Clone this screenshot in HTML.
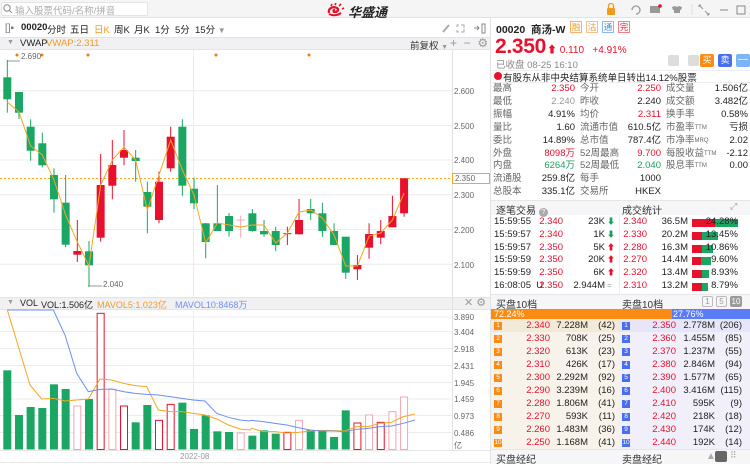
<!DOCTYPE html>
<html><head><meta charset="utf-8">
<style>
*{margin:0;padding:0;box-sizing:border-box}
body{width:750px;height:464px;overflow:hidden;background:#fff;font-family:"Liberation Sans","Noto Sans CJK SC",sans-serif;font-size:10px;color:#222;position:relative}
.a{position:absolute;white-space:nowrap}
.r{color:#e8112d}.g{color:#18a058}.gr{color:#999}.o{color:#f39a1e}
.rt{text-align:right}
</style></head><body>
<!-- top bar -->
<div class="a" style="left:0;top:0;width:750px;height:18px;background:#f5f5f5;border-bottom:1px solid #e2e2e2"></div>
<div class="a" style="left:1px;top:2px;width:147px;height:14px;background:#fff;border:1px solid #e4e4e4;border-radius:2px"></div>
<svg class="a" style="left:3px;top:4px" width="10" height="10"><circle cx="4" cy="4" r="3.2" fill="none" stroke="#888" stroke-width="1"/><line x1="6.5" y1="6.5" x2="9" y2="9" stroke="#888"/></svg>
<div class="a gr" style="left:15px;top:3px;font-size:9.5px;color:#aaa">输入股票代码/名称/拼音</div>
<svg class="a" style="left:327px;top:3px" width="18" height="14"><path d="M2 10 C1 5 6 3 10 5 C12 6 11 9 8 9 C6 9 6 7 8 7" fill="none" stroke="#e8112d" stroke-width="2.3"/><path d="M4 3 L5 1 M8 2 L9 0 M12 3 L14 1 M15 6 L17 5" stroke="#e8112d" stroke-width="1.6"/><path d="M2 11 Q8 14 14 10" fill="none" stroke="#e8112d" stroke-width="2"/></svg>
<div class="a" style="left:348px;top:2px;font-size:13px;font-weight:bold;font-style:italic;color:#222">华盛通</div>
<svg class="a" style="left:596px;top:3px" width="154" height="13">
<rect x="11" y="5" width="8" height="7" rx="1" fill="#f39a1e"/><path d="M12.5 5 V3 a2.5 2.5 0 0 1 5 0 V5" fill="none" stroke="#f39a1e" stroke-width="1.3"/>
<path d="M36 7 a4 4 0 1 1 4 4" fill="none" stroke="#999" stroke-width="1.3"/>
<rect x="54" y="3" width="10" height="7" fill="#999"/><circle cx="64" cy="3" r="1.8" fill="#e8112d"/>
<path d="M76 4 L79 3 L81 4 L83 3 L86 4 L85 7 L84 7 L84 10 L78 10 L78 7 L77 7Z" fill="#999"/>
<line x1="96" y1="1" x2="96" y2="12" stroke="#ddd"/>
<path d="M103 2 L107 6 M109 8 L113 12 M103 2 h2 M103 2 v2 M113 12 h-2 M113 12 v-2" stroke="#999" stroke-width="1.1" fill="none"/>
<line x1="124" y1="7" x2="132" y2="7" stroke="#888"/>
<rect x="141" y="3" width="8" height="8" fill="none" stroke="#888"/>
<path d="M154 3 L162 11 M162 3 L154 11" stroke="#888"/>
</svg>
<!-- left tabs -->
<div class="a" style="left:5px;top:23px;color:#777">[]▪</div>
<div class="a" style="left:21px;top:22px;font-weight:bold;font-size:9.5px">00020</div>
<div class="a" style="left:47px;top:22px;font-size:9.5px">分时</div>
<div class="a" style="left:70px;top:22px;font-size:9.5px">五日</div>
<div class="a o" style="left:94px;top:22px;font-size:9.5px">日K</div>
<div class="a" style="left:114px;top:22px;font-size:9.5px">周K</div>
<div class="a" style="left:134px;top:22px;font-size:9.5px">月K</div>
<div class="a" style="left:155px;top:22px;font-size:9.5px">1分</div>
<div class="a" style="left:175px;top:22px;font-size:9.5px">5分</div>
<div class="a" style="left:195px;top:22px;font-size:9.5px">15分 <span style="color:#999;font-size:8px">▼</span></div>
<svg class="a" style="left:440px;top:21px" width="50" height="14"><path d="M3 11 L9 4" stroke="#aaa" stroke-width="2"/><path d="M21 4 h3 v3 M21 11 h3 v-3 M19 4 h-2 v2 M19 11 h-2 v-2" stroke="#aaa" fill="none"/><path d="M34 7 h5 M37 5 l2 2 -2 2" stroke="#888" fill="none"/><rect x="42" y="3" width="3" height="9" fill="none" stroke="#888"/></svg>
<!-- VWAP bar -->
<div class="a" style="left:0;top:37px;width:490px;height:13px;background:#f1f1f3;border-top:1px solid #e4e4e4;border-bottom:1px solid #e4e4e4"></div>
<div class="a gr" style="left:7px;top:39px;font-size:7px">▼</div>
<div class="a" style="left:20px;top:38px;font-size:9.5px">VWAP</div>
<div class="a o" style="left:46px;top:38px;font-size:9.5px">VWAP:2.311</div>
<div class="a" style="left:410px;top:38px;font-size:9.5px;color:#333">前复权 <span style="color:#999;font-size:7px">▼</span></div>
<div class="a gr" style="left:450px;top:36px;font-size:12px">+ &nbsp;− &nbsp;⚙</div>
<!-- VOL bar -->
<div class="a" style="left:0;top:297px;width:490px;height:13px;background:#f1f1f3;border-top:1px solid #e4e4e4;border-bottom:1px solid #e4e4e4"></div>
<div class="a gr" style="left:7px;top:299px;font-size:7px">▼</div>
<div class="a" style="left:20px;top:298px;font-size:9px">VOL</div>
<div class="a" style="left:41px;top:298px;font-size:9px">VOL:1.506亿</div>
<div class="a o" style="left:97px;top:298px;font-size:9px">MAVOL5:1.023亿</div>
<div class="a" style="left:175px;top:298px;font-size:9px;color:#6d8ff0">MAVOL10:8468万</div>
<div class="a gr" style="left:464px;top:296px;font-size:11px">✕ ⚙</div>
<!-- charts -->
<svg class="a" style="left:0;top:0" width="490" height="464">
<g stroke="#ececec" stroke-width="1">
<line x1="0" y1="90.7" x2="452" y2="90.7"/><line x1="0" y1="125.5" x2="452" y2="125.5"/><line x1="0" y1="160" x2="452" y2="160"/><line x1="0" y1="194.8" x2="452" y2="194.8"/><line x1="0" y1="229.5" x2="452" y2="229.5"/><line x1="0" y1="264.3" x2="452" y2="264.3"/>
<line x1="193.5" y1="50" x2="193.5" y2="296"/><line x1="193.5" y1="311" x2="193.5" y2="450"/>
<line x1="0" y1="317" x2="452" y2="317"/><line x1="0" y1="331.5" x2="452" y2="331.5"/><line x1="0" y1="348.5" x2="452" y2="348.5"/><line x1="0" y1="365.5" x2="452" y2="365.5"/><line x1="0" y1="382.5" x2="452" y2="382.5"/><line x1="0" y1="399" x2="452" y2="399"/><line x1="0" y1="415.5" x2="452" y2="415.5"/><line x1="0" y1="432.5" x2="452" y2="432.5"/>
</g>
<line x1="452.5" y1="50" x2="452.5" y2="450" stroke="#e2e2e2"/>
<line x1="0" y1="450.5" x2="490" y2="450.5" stroke="#e6e6e6"/>
<line x1="0" y1="462.5" x2="490" y2="462.5" stroke="#e6e6e6"/>
<g fill="#666" font-size="8" font-family="Liberation Sans,sans-serif">
<text x="454" y="94">2.600</text><text x="454" y="129">2.500</text><text x="454" y="163">2.400</text><text x="454" y="198">2.300</text><text x="454" y="233">2.200</text><text x="454" y="268">2.100</text>
<text x="454" y="320">3.890</text><text x="454" y="335">3.404</text><text x="454" y="352">2.918</text><text x="454" y="369">2.431</text><text x="454" y="386">1.945</text><text x="454" y="402">1.459</text><text x="454" y="419">0.973</text><text x="454" y="436">0.486</text><text x="454" y="448">亿</text>
<text x="180" y="459" fill="#999">2022-08</text>
<text x="21" y="59">2.690</text><text x="103" y="287">2.040</text>
</g>
<path d="M7 61 H20 M88 286 H102" stroke="#777" stroke-width="0.8" fill="none"/>
<g fill="#f57c00"><circle cx="17" cy="55" r="1.5"/><circle cx="42" cy="55" r="1.5"/><circle cx="88" cy="55" r="1.5"/><circle cx="216" cy="55" r="1.5"/><circle cx="309" cy="55" r="1.5"/></g>
<line x1="0" y1="178.5" x2="452" y2="178.5" stroke="#f5a623" stroke-dasharray="2,2"/>
<g id="cd"></g>
<polyline id="vw" fill="none" stroke="#f5a623" stroke-width="1"/>
<g id="vb"></g>
<g transform="translate(0,295) scale(0.3333)" fill="none" stroke-width="3">
<polyline stroke="#f5a623" points="22,45 90,270 125,312 160,310 195,318 230,315 265,312 300,252 335,255 370,265 405,272 440,275 475,345 510,350 545,350 580,355 615,360 650,372 685,390 720,402 750,405 755,400 790,410 825,410 860,414 895,412 930,408 965,406 1000,407 1035,408 1070,395 1105,395 1140,385 1175,382 1210,365 1245,357"/>
<polyline stroke="#6d8ff0" points="22,45 160,45 195,120 230,235 265,290 300,283 335,282 370,290 405,295 440,298 475,300 510,305 545,310 580,315 615,318 650,355 685,367 720,375 750,378 755,376 790,380 825,385 860,390 895,398 930,405 965,408 1000,408 1035,410 1070,403 1105,400 1140,395 1175,393 1210,385 1245,375"/>
</g>
</svg>
<div class="a" style="left:452px;top:173px;width:38px;height:11px;border:1px solid #f5a623;background:#fff;font-size:8px;color:#666;padding-left:2px;line-height:9px">2.350</div>
<script>
var C=[['g',77.3,99.3,60,112.7],['g',92,112.7,92,119],['g',126.7,150.7,119.3,160.7],['g',143.3,165.3,132.7,167.3],['g',175,199.3,168.3,212.7],['g',202.7,244.7,175,247.3],['r',251,254.7,220,262],['g',251.3,265.3,241,286.7],['r',185,237.7,154,241.7],['r',165,185.7,140,199.3],['r',150,157.7,130,165.3],['g',157.7,161,150,181.7],['g',192,206.7,181.7,233.3],['r',181.7,220,171.7,223.3],['r',136.7,168.3,126.7,171.7],['g',126.7,185.7,119.3,195.7],['g',188.7,203.3,177.7,209],['g',223.3,242,223,258.3],['g',223.3,231,185,231],['g',216,231,213,236.7],['p',219.5,220.5,215.7,237.7],['g',213.3,231,209,231.7],['g',231,234.3,220,236.7],['g',231,245,226.7,251],['r',233.2,234.2,226.7,245],['r',220,234.3,199,234.3],['g',209,213.3,199,220],['g',213.3,231,202.7,236.7],['g',231,245,223.3,245],['g',236.7,272.7,236.7,279],['r',265,269.3,255,280],['r',234,247.7,223.3,258.7],['r',231,237.7,220,244.3],['r',216,227.3,195.7,227.3],['r',178.3,213.3,178.3,216.7]];
var V=[[226,'g'],[360,'g'],[336,'g'],[339,'g'],[268,'g'],[282,'g'],[333,'p'],[312,'g'],[55,'r'],[283,'p'],[333,'r'],[382,'g'],[330,'g'],[376,'r'],[328,'r'],[323,'g'],[402,'g'],[361,'g'],[409,'g'],[411,'g'],[414,'p'],[422,'g'],[406,'g'],[416,'g'],[412,'r'],[376,'p'],[405,'g'],[405,'g'],[426,'g'],[346,'g'],[384,'r'],[360,'p'],[382,'r'],[350,'p'],[306,'p']];
var W=[102,112,146,155,180,215,242,266,185,160,147,160,210,175,140,170,195,243,223,225,227,225,225,243,233,212,210,218,235,266,266,236,233,220,193];
var s='',pts=[],v='';
for(var i=0;i<C.length;i++){var c=C[i],x=7.3+11.67*i,col=c[0]=='g'?'#1ba664':(c[0]=='r'?'#e8112d':'#f4a6b0');
s+='<line x1="'+x+'" y1="'+c[3]+'" x2="'+x+'" y2="'+c[4]+'" stroke="'+col+'" stroke-width="1"/>';
s+='<rect x="'+(x-4)+'" y="'+c[1]+'" width="8" height="'+Math.max(1,c[2]-c[1])+'" fill="'+col+'"/>';
pts.push(x+','+W[i]);
var t=295+V[i][0]/3,h=449.5-t;
if(V[i][1]=='g')v+='<rect x="'+(x-4)+'" y="'+t+'" width="8" height="'+h+'" fill="#1ba664"/>';
else v+='<rect x="'+(x-3.5)+'" y="'+t+'" width="7" height="'+h+'" fill="#fff" stroke="'+(V[i][1]=='r'?'#e8112d':'#f4a6b0')+'"/>';}
document.getElementById('cd').innerHTML=s;document.getElementById('vw').setAttribute('points',pts.join(' '));document.getElementById('vb').innerHTML=v;
</script>
<!-- right panel -->
<div class="a" style="left:490px;top:18px;width:1px;height:446px;background:#e2e2e2"></div>
<div class="a" style="left:496px;top:22px;font-size:10.5px;font-weight:bold">00020 &nbsp;商汤-W</div>
<div class="a" style="left:570px;top:21px;width:12px;height:12px;border:1px solid #f5b070;color:#f39a1e;font-size:8.5px;text-align:center;line-height:10px">融</div>
<div class="a" style="left:586px;top:21px;width:12px;height:12px;border:1px solid #f5c090;color:#f39a1e;font-size:8.5px;text-align:center;line-height:10px">沽</div>
<div class="a" style="left:602px;top:21px;width:12px;height:12px;border:1px solid #8fb5f0;color:#4a85e8;font-size:8.5px;text-align:center;line-height:10px">通</div>
<div class="a" style="left:618px;top:21px;width:12px;height:12px;border:1px solid #f08090;color:#e8112d;font-size:8.5px;text-align:center;line-height:10px">完</div>
<div class="a r" style="left:495px;top:35px;font-size:21px;font-weight:bold;letter-spacing:-0.3px">2.350</div>
<div class="a r" style="left:547px;top:41px;font-size:10px">⬆ 0.110 &nbsp; +4.91%</div>
<div class="a gr" style="left:496px;top:57px;font-size:9.5px;color:#888">已收盘 08-25 16:10</div>
<div class="a" style="left:668px;top:55px;width:11px;height:11px;background:#ddd;border-radius:2px"></div>
<div class="a" style="left:688px;top:55px;width:11px;height:11px;background:#ddd;border-radius:2px"></div>
<div class="a" style="left:700px;top:54px;width:14px;height:13px;background:#fa8c16;color:#fff;font-size:9px;text-align:center;line-height:13px;border-radius:2px">买</div>
<div class="a" style="left:718px;top:54px;width:14px;height:13px;background:#4a6ef0;color:#fff;font-size:9px;text-align:center;line-height:13px;border-radius:2px">卖</div>
<div class="a" style="left:736px;top:54px;width:14px;height:13px;background:#7cb5f5;color:#fff;font-size:10px;text-align:center;line-height:12px;border-radius:2px">—</div>
<div class="a" style="left:491px;top:70px;width:259px;height:1px;background:#eee"></div>
<div class="a" style="left:494px;top:72px;width:8px;height:8px;border-radius:50%;background:#e8112d"></div>
<div class="a" style="left:503px;top:70px;font-size:9.5px">有股东从非中央结算系统单日转出14.12%股票</div>
<div class="a" style="left:491px;top:82px;width:259px;height:1px;background:#eee"></div>
<div class="a" style="left:493px;top:83px;width:257px;font-size:9.5px">
<div style="position:relative;height:117px;line-height:12.9px">
<div class="a" style="left:0;top:0;color:#666">最高<br>最低<br>振幅<br>量比<br>委比<br>外盘<br>内盘<br>流通股<br>总股本</div>
<div class="a rt" style="left:0;width:82px;top:0"><span class="r">2.350</span><br><span class="gr">2.240</span><br>4.91%<br>1.60<br>14.89%<br><span class="r">8098万</span><br><span class="g">6264万</span><br>259.8亿<br>335.1亿</div>
<div class="a" style="left:87px;top:0;color:#666">今开<br>昨收<br>均价<br>流通市值<br>总市值<br>52周最高<br>52周最低<br>每手<br>交易所</div>
<div class="a rt" style="left:87px;width:81px;top:0"><span class="r">2.250</span><br>2.240<br><span class="r">2.311</span><br>610.5亿<br>787.4亿<br><span class="r">9.700</span><br><span class="g">2.040</span><br>1000<br>HKEX</div>
<div class="a" style="left:173px;top:0;color:#666">成交量<br>成交额<br>换手率<br>市盈率<span style="font-size:6px;vertical-align:top">TTM</span><br>市净率<span style="font-size:6px;vertical-align:top">MRQ</span><br>每股收益<span style="font-size:6px;vertical-align:top">TTM</span><br>股息率<span style="font-size:6px;vertical-align:top">TTM</span></div>
<div class="a rt" style="left:173px;width:82px;top:0">1.506亿<br>3.482亿<br>0.58%<br>亏损<br>2.02<br>-2.12<br>0.00</div>
</div></div>
<div class="a" style="left:491px;top:200px;width:259px;height:15px;background:#f6f6f8;border-top:1px solid #e6e6e6"></div>
<div class="a" style="left:496px;top:202px;font-size:10px;color:#333">逐笔交易 <span style="display:inline-block;width:9px;height:9px;border-radius:50%;background:#aaa;color:#fff;font-size:7px;text-align:center;line-height:9px">?</span></div>
<div class="a" style="left:622px;top:202px;font-size:10px;color:#333">成交统计</div>
<div class="a gr" style="left:730px;top:201px;font-size:9px">⤢</div>
<div class="a" style="left:619px;top:215px;width:1px;height:79px;background:#eee"></div>
<div class="a" style="left:494px;top:216px;font-size:9.5px;line-height:12.8px">15:59:55<br>15:59:57<br>15:59:57<br>15:59:59<br>15:59:59<br>16:08:05 &nbsp;U</div>
<div class="a rt r" style="left:530px;width:33px;top:216px;font-size:9.5px;line-height:12.8px">2.340<br>2.340<br>2.350<br>2.350<br>2.350<br>2.350</div>
<div class="a rt" style="left:565px;width:40px;top:216px;font-size:9.5px;line-height:12.8px">23K<br>1K<br>5K<br>20K<br>6K<br>2.944M</div>
<div class="a" style="left:607px;top:216px;font-size:8px;line-height:12.8px"><span class="g">⬇</span><br><span class="g">⬇</span><br><span class="r">⬆</span><br><span class="r">⬆</span><br><span class="r">⬆</span><br><span class="gr">=</span></div>
<div class="a rt r" style="left:620px;width:27px;top:216px;font-size:9.5px;line-height:12.8px">2.340<br>2.330<br>2.280<br>2.270<br>2.320<br>2.310</div>
<div class="a rt" style="left:650px;width:38px;top:216px;font-size:9.5px;line-height:12.8px">36.5M<br>20.2M<br>16.3M<br>14.4M<br>13.4M<br>13.2M</div>
<svg class="a" style="left:692px;top:216px" width="50" height="80">
<rect x="0" y="3" width="46" height="8" fill="#1ba664"/><rect x="0" y="3" width="23" height="8" fill="#e8112d"/>
<rect x="0" y="16" width="26" height="8" fill="#1ba664"/><rect x="0" y="16" width="10" height="8" fill="#e8112d"/>
<rect x="0" y="29" width="21" height="8" fill="#1ba664"/><rect x="0" y="29" width="10" height="8" fill="#e8112d"/>
<rect x="0" y="41" width="19" height="8" fill="#1ba664"/><rect x="0" y="41" width="9" height="8" fill="#e8112d"/>
<rect x="0" y="54" width="17" height="8" fill="#1ba664"/><rect x="0" y="54" width="10" height="8" fill="#e8112d"/>
<rect x="0" y="67" width="16" height="8" fill="#1ba664"/><rect x="0" y="67" width="10" height="8" fill="#e8112d"/>
</svg>
<div class="a rt" style="left:700px;width:38px;top:216px;font-size:9.5px;line-height:12.8px">24.28%<br>13.45%<br>10.86%<br>9.60%<br>8.93%<br>8.79%</div>
<div class="a" style="left:491px;top:294px;width:259px;height:15px;background:#f6f6f8;border-top:1px solid #e6e6e6"></div>
<div class="a" style="left:496px;top:296px;font-size:10px;color:#333">买盘10档</div>
<div class="a" style="left:622px;top:296px;font-size:10px;color:#333">卖盘10档</div>
<div class="a" style="left:702px;top:296px;width:11px;height:11px;border:1px solid #bbb;border-radius:2px;font-size:8px;color:#999;text-align:center;line-height:9px">1</div>
<div class="a" style="left:716px;top:296px;width:11px;height:11px;border:1px solid #bbb;border-radius:2px;font-size:8px;color:#999;text-align:center;line-height:9px">5</div>
<div class="a" style="left:730px;top:296px;width:12px;height:11px;background:#9a9a9a;border-radius:2px;font-size:8px;color:#fff;text-align:center;line-height:11px">10</div>
<div class="a" style="left:491px;top:309px;width:181px;height:10px;background:#fa8c16;color:#fff;font-size:9px;line-height:10px;padding-left:3px">72.24%</div>
<div class="a" style="left:672px;top:309px;width:78px;height:10px;background:#5b7cf5;color:#fff;font-size:9px;line-height:10px;padding-left:1px">27.76%</div>
<div class="a" style="left:491px;top:319px;width:128px;height:130px;background:#f7f2ea"></div>
<div class="a" style="left:491px;top:319px;width:128px;height:13px;background:#f3e9d8"></div>
<div class="a" style="left:619px;top:319px;width:131px;height:130px;background:#f1f0fa"></div>
<div class="a" style="left:619px;top:319px;width:131px;height:13px;background:#e7e6f8"></div>
<div id="ob"></div>
<script>
var B=[['2.340','7.228M','(42)','2.350','2.778M','(206)'],['2.330','708K','(25)','2.360','1.455M','(85)'],['2.320','613K','(23)','2.370','1.237M','(55)'],['2.310','426K','(17)','2.380','2.846M','(94)'],['2.300','2.292M','(92)','2.390','1.577M','(65)'],['2.290','3.239M','(16)','2.400','3.416M','(115)'],['2.280','1.806M','(41)','2.410','595K','(9)'],['2.270','593K','(11)','2.420','218K','(18)'],['2.260','1.483M','(36)','2.430','174K','(12)'],['2.250','1.168M','(41)','2.440','192K','(14)']];
var h='';for(var i=0;i<10;i++){var y=319+i*13,b=B[i];
h+='<div class="a" style="left:494px;top:'+(y+2.5)+'px;width:8px;height:8px;background:#fa8c16;color:#fff;font-size:6.5px;text-align:center;line-height:8px">'+(i+1)+'</div>';
h+='<div class="a rt r" style="left:510px;width:40px;top:'+(y+1)+'px;font-size:9.5px">'+b[0]+'</div>';
h+='<div class="a rt" style="left:548px;width:40px;top:'+(y+1)+'px;font-size:9.5px">'+b[1]+'</div>';
h+='<div class="a rt" style="left:589px;width:26px;top:'+(y+1)+'px;font-size:9.5px">'+b[2]+'</div>';
h+='<div class="a" style="left:622px;top:'+(y+2.5)+'px;width:8px;height:8px;background:#4a6ef0;color:#fff;font-size:6.5px;text-align:center;line-height:8px">'+(i+1)+'</div>';
h+='<div class="a rt r" style="left:636px;width:40px;top:'+(y+1)+'px;font-size:9.5px">'+b[3]+'</div>';
h+='<div class="a rt" style="left:675px;width:40px;top:'+(y+1)+'px;font-size:9.5px">'+b[4]+'</div>';
h+='<div class="a rt" style="left:716px;width:26px;top:'+(y+1)+'px;font-size:9.5px">'+b[5]+'</div>';}
document.getElementById('ob').innerHTML=h;
</script>
<div class="a" style="left:491px;top:449px;width:259px;height:15px;background:#f6f6f8;border-top:1px solid #e6e6e6"></div>
<div class="a" style="left:496px;top:451px;font-size:10px;color:#333">买盘经纪</div>
<div class="a" style="left:622px;top:451px;font-size:10px;color:#333">卖盘经纪</div>
<div class="a" style="left:706px;top:451px;font-size:10px;color:#aaa">▲</div>
<div class="a" style="left:715px;top:451px;width:12px;height:11px;background:#666;border-radius:2px"></div>
<div class="a" style="left:730px;top:450px;font-size:9px;color:#aaa">⠿</div>
</body></html>
